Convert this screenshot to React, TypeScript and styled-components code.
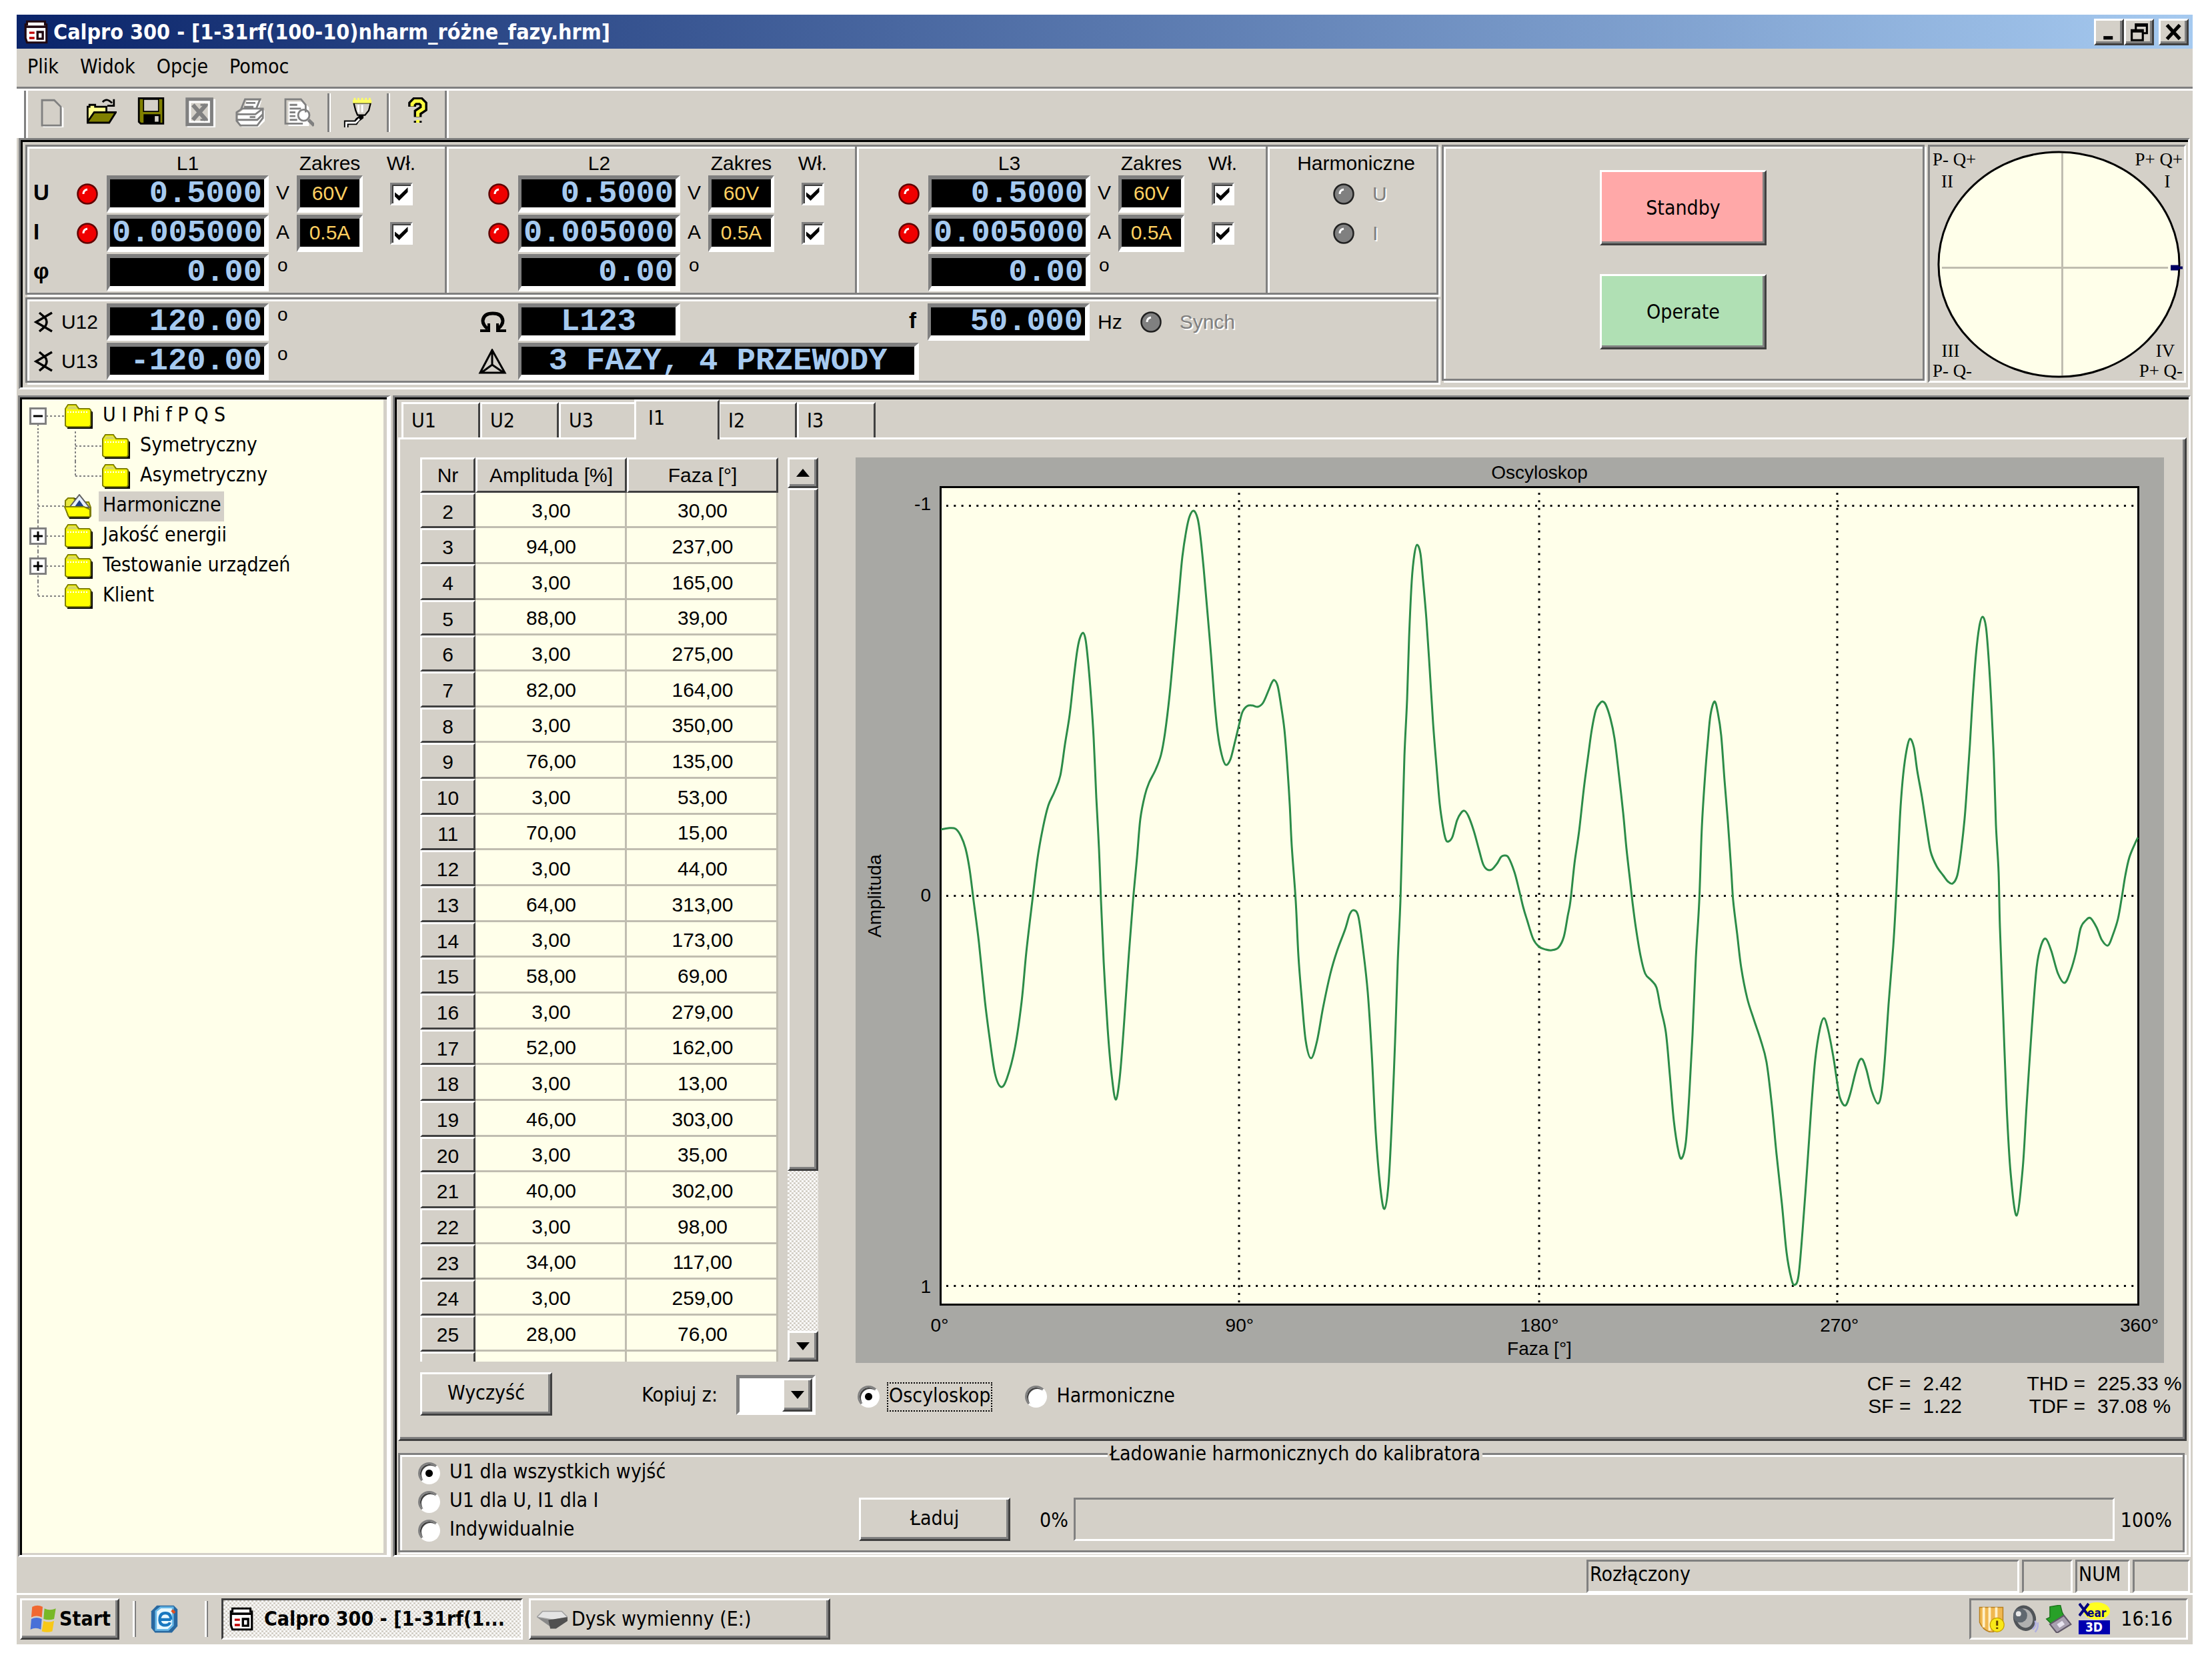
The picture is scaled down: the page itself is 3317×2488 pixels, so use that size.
import React from "react";
import styled, { createGlobalStyle, css } from "styled-components";

const face = "#d4d0c8";
const shade = "#808080";
const dark = "#404040";
const paper = "#ffffea";

const ui = `"DejaVu Sans Condensed", "DejaVu Sans", "Noto Sans", sans-serif`;
const sans = `"Liberation Sans", Arial, sans-serif`;
const mono = `"Liberation Mono", "Courier New", monospace`;
const serif = `"Liberation Serif", "Times New Roman", serif`;

const Global = createGlobalStyle`
  * { box-sizing: border-box; }
  body { margin: 0; background: #fff; }
  button, input, select { font: inherit; color: inherit; margin: 0; padding: 0; border-radius: 0; }
  svg { display: block; flex: none; }
`;

const raised = css`
  background: ${face};
  border: 3px solid;
  border-color: #fff ${dark} ${dark} #fff;
  box-shadow: inset -3px -3px 0 ${shade};
`;

const sunken = css`
  border: 3px solid;
  border-color: ${shade} #fff #fff ${shade};
`;

const etched = css`
  border: 3px solid ${shade};
  box-shadow: inset 3px 3px 0 #fff, 3px 3px 0 #fff;
`;

const Desktop = styled.div`
  min-height: 100vh;
  padding: 22px 29px 24px 25px;
  display: flex;
  flex-direction: column;
  font: 30px/36px ${ui};
  color: #000;
  white-space: nowrap;
`;

const Window = styled.div`
  flex: 1;
  display: flex;
  flex-direction: column;
  background: ${face};
`;

/* Title bar and menu */

const TitleBar = styled.header`
  height: 51px;
  padding: 0 6px 0 11px;
  display: flex;
  align-items: center;
  background: linear-gradient(90deg, #0a246a, #a6caf0);
  color: #fff;
`;

const Title = styled.h1`
  margin: 0 auto 0 8px;
  font: bold 32px/38px ${ui};
`;

const CaptionButton = styled.button<{ $apart?: boolean }>`
  ${raised}
  width: 45px;
  height: 40px;
  margin-left: ${(p) => (p.$apart ? 7 : 0)}px;
  display: grid;
  place-items: center;
`;

const MenuBar = styled.nav`
  height: 60px;
  padding: 0 16px 4px;
  display: flex;
  align-items: center;
  gap: 32px;
  border-bottom: 3px solid ${shade};
`;

const MenuItem = styled.button`
  border: 0;
  background: none;
`;

const ToolBar = styled.div`
  height: 74px;
  display: flex;
  border-top: 3px solid #fff;
`;

const ToolGroup = styled.div`
  margin-left: 11px;
  padding: 0 4px 6px 2px;
  display: flex;
  align-items: center;
  border-left: 3px solid ${shade};
  border-right: 3px solid ${shade};
  box-shadow: inset 3px 0 0 #fff, 3px 0 0 #fff, -11px 0 0 #fff;
`;

const ToolButton = styled.button`
  width: 74px;
  height: 60px;
  border: 0;
  background: none;
  display: grid;
  place-items: center;
`;

const Separator = styled.span`
  width: 3px;
  height: 58px;
  margin: 0 6px;
  background: ${shade};
  box-shadow: 2px 0 0 #fff;
`;

/* Instrument panel */

const Instruments = styled.section`
  margin: 0 4px 9px 3px;
  height: 377px;
  padding: 7px 3px 7px 7px;
  display: grid;
  grid-template-columns: 2119px 1fr 387px;
  column-gap: 5px;
  ${sunken}
  box-shadow: inset 3px 3px 0 #000;
  font-family: ${sans};
  font-size: 30px;
`;

const Readings = styled.div`
  display: flex;
  flex-direction: column;
  gap: 4px;
`;

const Phases = styled.div`
  ${etched}
  height: 225px;
  display: grid;
  grid-template-columns: 629px 615px 616px 1fr;
`;

const Phase = styled.fieldset<{ $lead: number }>`
  margin: 0;
  padding: 0;
  border: 0;
  border-right: 3px solid ${shade};
  box-shadow: 3px 0 0 #fff;
  display: grid;
  grid-template-columns: ${(p) => p.$lead}px 243px 42px 99px 115px;
  grid-template-rows: 40px 56px 56px 56px;
  row-gap: 3px;
  align-items: center;
`;

const Head = styled.span<{ $col?: number }>`
  grid-column: ${(p) => p.$col ?? "auto"};
  justify-self: center;
  padding-top: 9px;
  line-height: 32px;
`;

const Lead = styled.span`
  padding: 0 13px 0 9px;
  display: flex;
  align-items: center;
  justify-content: space-between;
  > svg:only-child { margin-left: auto; }
`;

const Big = styled.b`
  padding-bottom: 4px;
  font-size: 33px;
  line-height: 36px;
`;

const Lcd = styled.input<{ $span?: boolean; $align?: string }>`
  width: ${(p) => (p.$span ? 601 : 243)}px;
  height: 56px;
  padding: 0 3px;
  border: solid;
  border-width: 6px 7px 8px 5px;
  border-color: ${shade} #fff #fff ${shade};
  background: #000;
  color: #a6caf0;
  font: bold 47px/42px ${mono};
  text-align: ${(p) => p.$align ?? "right"};
  outline: none;
`;

const Range = styled.input`
  width: 99px;
  height: 56px;
  border: solid;
  border-width: 6px 5px 8px 5px;
  border-color: ${shade} #fff #fff ${shade};
  background: #000;
  color: #ffd060;
  font: 30px/40px ${sans};
  text-align: center;
  outline: none;
`;

const Unit = styled.span`
  padding-left: 11px;
  padding-bottom: 4px;
`;

const Degree = styled.span`
  align-self: start;
  padding-left: 13px;
  font-size: 28px;
  line-height: 34px;
`;

const Check = styled.input`
  appearance: none;
  justify-self: center;
  width: 34px;
  height: 34px;
  display: grid;
  place-items: center;
  background: #fff;
  border: 3px solid;
  border-color: ${shade} #fff #fff ${shade};
  box-shadow: inset 2px 2px 0 ${dark};
  &:checked::before {
    content: "";
    width: 20px;
    height: 20px;
    background: #000;
    clip-path: polygon(0 35%, 0 65%, 35% 100%, 100% 35%, 100% 0, 35% 62%);
  }
`;

const HarmonicLeds = styled.div`
  display: grid;
  grid-template-rows: 40px 56px 56px 56px;
  row-gap: 3px;
  padding-left: 12px;
`;

const LedLine = styled.span<{ $inset?: number }>`
  padding-left: ${(p) => p.$inset ?? 0}px;
  display: flex;
  align-items: center;
  gap: 27px;
  color: ${shade};
  text-shadow: 2px 2px 0 #fff;
`;

const Hertz = styled.span`
  color: #000;
  text-shadow: none;
`;

const Angles = styled.div`
  ${etched}
  height: 128px;
  padding-top: 6px;
  display: grid;
  grid-template-columns: 119px 243px 374px 243px 371px 243px 1fr;
  grid-template-rows: 56px 56px;
  row-gap: 3px;
  align-items: center;
`;

const Between = styled.span`
  align-self: stretch;
  display: flex;
  justify-content: space-between;
  align-items: center;
  padding-right: 17px;
`;

const OutputPanel = styled.div`
  ${etched}
  padding-bottom: 9px;
  margin-bottom: 3px;
  display: flex;
  flex-direction: column;
  align-items: center;
  justify-content: center;
  gap: 43px;
  font-family: ${ui};
`;

const OutputButton = styled.button<{ $color: string }>`
  ${raised}
  width: 250px;
  height: 113px;
  background: ${(p) => p.$color};
`;

const Phasor = styled.div`
  ${sunken}
  text { font: 27px ${serif}; }
`;

/* Work area */

const Work = styled.main`
  flex: 1;
  margin: 0 3px 0 2px;
  display: grid;
  grid-template-columns: 559px 1fr;
  column-gap: 3px;
`;

const Tree = styled.ul`
  ${sunken}
  border-right-width: 6px;
  box-shadow: inset 3px 3px 0 #000, inset -5px -3px 0 ${face};
  margin: 0;
  padding: 6px 0 0 10px;
  background: ${paper};
  list-style: none;
`;

const NodeRow = styled.div`
  height: 45px;
  display: flex;
  align-items: center;
`;

const NodeText = styled.button<{ $selected?: boolean }>`
  height: 45px;
  margin-left: 8px;
  padding: 0 4px 5px 6px;
  border: 0;
  background: ${(p) => (p.$selected ? face : "none")};
`;

const Editor = styled.section`
  ${sunken}
  box-shadow: inset 3px 3px 0 #000;
  padding: 3px 3px 4px 5px;
  display: flex;
  flex-direction: column;
`;

const Tabs = styled.div`
  height: 57px;
  padding-left: 5px;
  display: flex;
  align-items: flex-end;
`;

const Tab = styled.button<{ $active?: boolean }>`
  position: relative;
  width: ${(p) => (p.$active ? 128 : 118)}px;
  height: ${(p) => (p.$active ? 60 : 53)}px;
  margin: ${(p) => (p.$active ? "0 -2px -3px -5px" : "0")};
  padding: 0 0 ${(p) => (p.$active ? 8 : 0)}px ${(p) => (p.$active ? 18 : 12)}px;
  text-align: left;
  background: ${face};
  border: solid #fff;
  border-width: 3px 0 0 3px;
  border-right: 3px solid ${dark};
  z-index: ${(p) => (p.$active ? 1 : 0)};
`;

const Page = styled.div`
  flex: 1;
  border: 3px solid;
  border-color: #fff ${dark} ${dark} #fff;
  box-shadow: inset -3px -3px 0 ${shade};
  padding: 27px 3px 35px 30px;
  display: grid;
  grid-template-columns: 597px minmax(0, 1fr);
  grid-template-rows: 1fr auto;
  column-gap: 56px;
  row-gap: 14px;
`;

const ListBox = styled.div`
  display: flex;
  justify-content: space-between;
  height: 1356px;
`;

const TableClip = styled.div`
  overflow: hidden;
`;

const Table = styled.table`
  width: 537px;
  table-layout: fixed;
  border-collapse: separate;
  border-spacing: 0;
  font: 30px/36px ${sans};
  text-align: center;
  th { font-weight: normal; padding: 0; ${raised} box-shadow: none; }
  tbody th { padding-top: 4px; }
  tbody tr { height: 54px; }
  tbody tr:nth-child(3n + 1) { height: 53px; }
  thead tr { height: 53px; }
  td { padding: 4px 0 0 3px; background: ${paper}; border: solid #c0bdb0; border-width: 0 3px 3px 0; }
`;

const Scroll = styled.div`
  width: 46px;
  display: flex;
  flex-direction: column;
`;

const ScrollButton = styled.button`
  ${raised}
  height: 46px;
  display: grid;
  place-items: center;
`;

const Track = styled.div`
  flex: 1;
  display: flex;
  flex-direction: column;
  background: repeating-conic-gradient(#fff 0 25%, ${face} 0 50%) 0 0 / 6px 6px;
`;

const Thumb = styled.div`
  ${raised}
  flex: 0 0 81%;
`;

const Chart = styled.figure`
  margin: 0 28px 0 0;
  display: grid;
  grid-template-columns: 44px 82px minmax(0, 1fr) 37px;
  grid-template-rows: 43px 1fr 86px;
  background: #a8a8a4;
  font: 28px/30px ${sans};
`;

const ChartTitle = styled.figcaption`
  grid-column: 3;
  padding-top: 8px;
  text-align: center;
`;

const AxisName = styled.span`
  grid-area: 2 / 1;
  justify-self: end;
  writing-mode: vertical-rl;
  rotate: 180deg;
  text-align: center;
`;

const YTicks = styled.div`
  grid-area: 2 / 2;
  padding: 12px 13px 13px 0;
  display: flex;
  flex-direction: column;
  justify-content: space-between;
  align-items: flex-end;
`;

const Plot = styled.svg`
  grid-area: 2 / 3;
  width: 100%;
  height: 100%;
`;

const XAxis = styled.div`
  grid-area: 3 / 3;
  margin: 0 -40px;
  padding-top: 15px;
  text-align: center;
`;

const XTicks = styled.div`
  display: flex;
  justify-content: space-between;
  span { width: 80px; }
  margin-bottom: 5px;
`;

const TableTools = styled.div`
  display: flex;
  align-items: center;
`;

const PushButton = styled.button<{ $wide?: boolean }>`
  ${raised}
  width: ${(p) => (p.$wide ? 227 : 198)}px;
  height: 65px;
  padding-bottom: 4px;
`;

const CopyLabel = styled.label`
  margin: 2px 4px 0 auto;
  display: flex;
  align-items: center;
  gap: 28px;
`;

const Combo = styled.span`
  width: 119px;
  height: 60px;
  border: 5px solid;
  border-color: ${shade} #fff #fff ${shade};
  background: #fff;
  display: grid;
  grid-template-columns: 1fr 45px;
  select {
    grid-area: 1 / 1 / 2 / 3;
    appearance: none;
    border: 0;
    background: #fff;
  }
`;

const ComboArrow = styled.span`
  ${raised}
  grid-area: 1 / 2;
  pointer-events: none;
  display: grid;
  place-items: center;
`;

const ViewTools = styled.div`
  height: 65px;
  padding-left: 3px;
  display: flex;
  align-items: center;
`;

const Choice = styled.label<{ $focus?: boolean }>`
  height: 32px;
  margin: 8px 51px 0 0;
  display: flex;
  align-items: center;
  gap: 13px;
  span {
    padding: 0 1px 4px;
    outline: ${(p) => (p.$focus ? "2px dotted #000" : "none")};
  }
`;

const Radio = styled.input.attrs({ type: "radio" })`
  appearance: none;
  width: 33px;
  height: 33px;
  border: 3px solid;
  border-color: ${shade} #fff #fff ${shade};
  border-radius: 50%;
  background: #fff;
  box-shadow: inset 2px 2px 0 ${dark};
  &:checked { background: radial-gradient(circle, #000 0 5px, #fff 6px); }
`;

const Factors = styled.dl`
  margin: 0 0 0 auto;
  align-self: start;
  display: grid;
  grid-template-columns: auto 156px auto 128px;
  font: 30px/34px ${sans};
  dt { text-align: right; padding-right: 18px; }
  dd { margin: 0; }
`;

const Loader = styled.fieldset`
  margin: 6px 3px 0 0;
  padding: 0 16px 14px 27px;
  border: 3px solid ${shade};
  min-width: 0;
  box-shadow: inset 3px 3px 0 #fff, 3px 3px 0 #fff;
  legend {
    margin: 0 auto;
    padding: 0 3px;
    line-height: 26px;
    background: ${face};
  }
`;

const LoaderBody = styled.div`
  display: grid;
  grid-template-columns: 661px auto auto 1fr auto;
  align-items: end;
`;

const Modes = styled.div`
  display: flex;
  flex-direction: column;
  gap: 11px;
  ${Choice} { margin: 0; }
`;

const Percent = styled.span<{ $before?: boolean }>`
  padding: 0 ${(p) => (p.$before ? 8 : 0)}px 13px ${(p) => (p.$before ? 44 : 9)}px;
`;

const Progress = styled.div`
  ${sunken}
  height: 65px;
`;

/* Status bar and task bar */

const StatusBar = styled.footer`
  margin: 4px 4px 0 0;
  height: 50px;
  display: flex;
  justify-content: flex-end;
  gap: 4px;
`;

const StatusCell = styled.span<{ $width: number }>`
  ${sunken}
  width: ${(p) => p.$width}px;
  padding-left: 2px;
  line-height: 38px;
`;

const TaskBar = styled.footer`
  height: 77px;
  padding: 5px 7px 8px 5px;
  display: flex;
  align-items: center;
  border-top: 3px solid #fff;
`;

const StartButton = styled.button`
  ${raised}
  width: 149px;
  height: 62px;
  display: flex;
  align-items: center;
  justify-content: center;
  gap: 4px;
  font-weight: bold;
`;

const Grip = styled.span<{ $apart?: boolean }>`
  width: 5px;
  height: 54px;
  margin: 0 20px 0 ${(p) => (p.$apart ? 38 : 20)}px;
  border-left: 3px solid #fff;
  border-right: 2px solid ${shade};
`;

const TaskButton = styled.button<{ $active?: boolean }>`
  ${raised}
  width: 452px;
  height: 62px;
  padding: 0 0 0 9px;
  margin-right: 9px;
  display: flex;
  align-items: center;
  gap: 6px;
  ${(p) =>
    p.$active &&
    css`
      gap: 16px;
      font-weight: bold;
      background: repeating-conic-gradient(#fff 0 25%, ${face} 0 50%) 0 0 / 6px 6px;
      border-color: ${dark} #fff #fff ${dark};
      box-shadow: none;
    `}
`;

const Tray = styled.div`
  ${sunken}
  width: 328px;
  height: 62px;
  margin-left: auto;
  padding: 0 20px 0 10px;
  display: flex;
  align-items: center;
  gap: 9px;
  time { margin-left: auto; }
`;

/* Drawings */

const Icon = ({ size = 45, children }: { size?: number; children: React.ReactNode }) => (
  <svg width={size} height={size} viewBox="0 0 16 16" fill="none" aria-hidden="true">
    {children}
  </svg>
);

const AppIcon = ({ tint = "#000" }: { tint?: string }) => (
  <svg width="36" height="36" viewBox="0 0 16 16" fill="none" aria-hidden="true">
    <path d="M1 12V3h1V1h12v2h1v12H2z" fill="#fff" stroke={tint} strokeWidth="1.4" />
    <path d="M1 4.5h14" stroke={tint} strokeWidth="1.6" />
    <path d="M3.5 8.5h3.5M3.5 12h3.5" stroke="#c00000" strokeWidth="1.5" />
    <path d="M9 8h3.5v4.5H9z" stroke={tint} strokeWidth="1.5" />
  </svg>
);

const Led = ({ on = false }: { on?: boolean }) => (
  <svg width="32" height="32" viewBox="0 0 32 32" aria-hidden="true">
    <circle cx="16" cy="16" r="14.5" fill={on ? "#f00000" : "#808080"} stroke={on ? "#600000" : "#202020"} strokeWidth="2.5" />
    <path d="M10 16q0-6 6-7" stroke="#fff" strokeWidth="3" fill="none" />
  </svg>
);

const Triangle = ({ down = false }: { down?: boolean }) => (
  <svg width="20" height="12" viewBox="0 0 20 12" aria-hidden="true">
    <path d={down ? "M0 0h20L10 12z" : "M0 12h20L10 0z"} fill="#000" />
  </svg>
);

const Folder = ({ open = false }: { open?: boolean }) => (
  <svg width="44" height="38" viewBox="0 0 44 38" aria-hidden="true">
    {open ? (
      <>
        <path d="M3 20l3-12 8-3 24 8 3 20-4 4H8z" fill="#000" />
        <path d="M2 20V10l4-4h8l6 6h17l3 8v12H6z" fill="#e8e840" stroke="#808000" strokeWidth="2" />
        <path d="M8 20L23 1l15 19z" fill="#e8f0ff" stroke="#606060" strokeWidth="2" />
        <path d="M16 19l7-10 7 10z" fill="#204080" />
        <path d="M1 19h29l9 4v11H7z" fill="#ffff00" stroke="#808000" strokeWidth="2" />
      </>
    ) : (
      <>
        <path d="M5 37V9l4-5h12l4 5h15l3 3v25z" fill="#000" />
        <path d="M2 32V7l4-6h12l4 6h16l2 2v23l-2 2H4z" fill="#ffff00" stroke="#808000" strokeWidth="2" />
        <path d="M4 8l3-5h10l4 5z" fill="#d8d860" />
        <path d="M5 12h32" stroke="#fff" strokeWidth="2" strokeDasharray="2 2" />
      </>
    )}
  </svg>
);

/* Branch lines and the expander box left of a tree node. */
const Branch = ({ sign, first, last, through }: { sign?: string; first?: boolean; last?: boolean; through?: boolean }) => (
  <svg width="56" height="45" viewBox="0 0 56 45" fill="none" aria-hidden="true">
    <path d={`M17 ${first ? 22 : 0}V${last ? 22 : 45}`} stroke={shade} strokeWidth="2" strokeDasharray="3 3" />
    {!through && <path d="M17 22h39" stroke={shade} strokeWidth="2" strokeDasharray="3 3" />}
    {sign && (
      <>
        <path d="M5.5 10.5h23v23h-23z" fill="#fff" stroke={shade} strokeWidth="3" />
        <path d={sign === "-" ? "M10 22h14" : "M10 22h14M17 15v14"} stroke="#000" strokeWidth="3" />
      </>
    )}
  </svg>
);

const AngleIcon = () => (
  <svg width="30" height="34" viewBox="0 0 30 34" fill="none" stroke="#000" strokeWidth="3.5" aria-hidden="true">
    <path d="M28 3L4 17l24 14M9 3q5 4 9 8 4 6 0 12-4 4-9 8" />
  </svg>
);

const toolIcons: Record<string, React.ReactNode> = {
  Nowy: (
    <>
      <path d="M3.5 2.5h6.5l3.5 3.5v10h-10z" stroke="#fff" />
      <path d="M2.5 1.5h6.5l3.5 3.500v10h-10z" stroke={shade} fill={face} />
    </>
  ),
  Otwórz: (
    <>
      <path d="M.5 13V5h1V4h3v1h6v3" fill="#ffff90" stroke="#000" />
      <path d="M.5 13L4 8h11.5l-3.5 5.500H.5z" fill="#808000" stroke="#000" />
      <path d="M8.500 2.500q2-2.500 5 .5M14.500 1v3.500h-3.500" stroke="#000" />
    </>
  ),
  Zapisz: (
    <>
      <path d="M1.500.5h13v13.500h-12l-1-1z" fill="#808000" stroke="#000" />
      <path d="M4 1h8v6.500H4z" fill={face} stroke="#000" strokeWidth=".6" />
      <path d="M4 9h9v5H4z" fill="#000" />
      <path d="M10 10h2v3h-2z" fill={face} />
    </>
  ),
  Excel: (
    <>
      <path d="M1 1h15v15.500H1z" fill="#fff" />
      <path d="M1 1h13v13.500H1z" stroke={shade} strokeWidth="1.8" />
      <path d="M3 3h9v9.500H3z" fill={face} />
      <path d="M4 4l7 8M11 4l-7 8" stroke={shade} strokeWidth="2.2" />
      <path d="M8 4h4M8 12h4" stroke={shade} />
    </>
  ),
  Drukuj: (
    <>
      <path d="M5.500 1h8l-2 6h-8zM1 8l3-2.500h10l1.500 1v5L12 15H3l-2-3z" fill="#fff" transform="translate(.8 .8)" />
      <path d="M5.500 1h8l-2 5h-8zM6 3h5M5 5h5M1 8l3-2h11v5l-3 4H3l-2-2.500zM1 9h10l4-3M1 12h11l3-3" stroke={shade} />
      <path d="M8 10h3v1H8z" fill={shade} />
    </>
  ),
  Podgląd: (
    <>
      <path d="M1.500 1.500h8l3 3v10h-11z" fill="#fff" transform="translate(.8 .8)" />
      <path d="M11.500 8V4L9 1H.7v13H10M3 4h4M3 6h6M3 8h3M3 10h3M3 12h4" stroke={shade} />
      <circle cx="10.500" cy="9.500" r="3" stroke={shade} />
      <path d="M13 12l3 3" stroke={shade} strokeWidth="1.8" />
    </>
  ),
  Sonda: (
    <>
      <path d="M1.500 16v-2.500h5l1-1.500 2-1.500V8" stroke="#000" strokeWidth="2.4" />
      <path d="M1.500 16.200v-2.700h5l2-2" stroke="#fff" strokeWidth="1" />
      <path d="M5.500 3h9l-1 4-2 2.500h-4L6.500 7z" fill={face} stroke="#000" strokeWidth=".8" />
      <path d="M8 4v4M10 4v4" stroke="#fff" />
      <path d="M5 2.200h10" stroke="#ffff60" strokeWidth="1.800" />
      <path d="M5.500.8h9" stroke="#ffff60" strokeDasharray="1 1" />
    </>
  ),
  Pomoc: (
    <>
      <path d="M5 5V3.500L6.500 2h3L11 3.500V6L8 8v2.500M8 12.500v1" stroke="#000" strokeWidth="4.200" />
      <path d="M5 4.800V3.500L6.500 2h3L11 3.500V6L8 8v2.300M8 12v1.500" stroke="#ffff40" strokeWidth="1.8" />
    </>
  ),
};

/* Oscilloscope trace, in the plot's own units. */
const trace: number[] = [
  1412, 1243, 1423, 1241, 1434, 1242, 1442, 1253, 1449, 1272, 1455, 1303, 1461, 1350, 1469, 1413, 1478, 1501, 1485, 1556,
  1493, 1609, 1502, 1629, 1511, 1616, 1523, 1570, 1533, 1501, 1540, 1427, 1549, 1350, 1557, 1285, 1565, 1240, 1573, 1207,
  1582, 1187, 1591, 1162, 1598, 1115, 1605, 1071, 1611, 1017, 1616, 977, 1620, 957, 1625, 948, 1629, 959, 1633, 995,
  1637, 1044, 1641, 1106, 1645, 1196, 1649, 1272, 1652, 1350, 1656, 1441, 1662, 1542, 1668, 1611, 1674, 1648, 1680, 1616,
  1686, 1542, 1693, 1441, 1700, 1350, 1706, 1285, 1711, 1227, 1718, 1191, 1724, 1173, 1734, 1153, 1742, 1131, 1748, 1098,
  1755, 1040, 1762, 964, 1769, 888, 1774, 834, 1780, 794, 1785, 773, 1791, 765, 1797, 777, 1801, 803, 1806, 852,
  1811, 910, 1817, 981, 1822, 1048, 1827, 1098, 1833, 1131, 1839, 1146, 1846, 1138, 1853, 1111, 1859, 1086, 1864, 1067,
  1871, 1058, 1879, 1057, 1887, 1059, 1895, 1053, 1903, 1035, 1908, 1023, 1912, 1019, 1917, 1028, 1922, 1057, 1927, 1093,
  1931, 1142, 1935, 1205, 1938, 1267, 1944, 1350, 1948, 1432, 1953, 1496, 1959, 1560, 1967, 1586, 1976, 1560, 1985, 1510,
  1996, 1459, 2006, 1425, 2018, 1393, 2025, 1370, 2031, 1364, 2038, 1374, 2045, 1423, 2052, 1487, 2058, 1579, 2064, 1698,
  2071, 1781, 2077, 1812, 2083, 1776, 2088, 1684, 2093, 1560, 2097, 1441, 2101, 1350, 2104, 1240, 2107, 1133, 2111, 1048,
  2114, 955, 2118, 870, 2122, 830, 2126, 816, 2131, 829, 2135, 870, 2140, 928, 2145, 1004, 2150, 1084, 2155, 1147,
  2160, 1205, 2165, 1240, 2169, 1258, 2173, 1261, 2179, 1254, 2186, 1229, 2192, 1218, 2197, 1215, 2203, 1223, 2211, 1245,
  2219, 1274, 2225, 1295, 2231, 1303, 2238, 1303, 2246, 1294, 2252, 1284, 2257, 1282, 2263, 1285, 2272, 1307, 2279, 1334,
  2285, 1359, 2291, 1379, 2300, 1407, 2309, 1419, 2319, 1423, 2328, 1424, 2338, 1420, 2346, 1404, 2352, 1372, 2356, 1350,
  2362, 1294, 2369, 1245, 2376, 1182, 2383, 1129, 2388, 1093, 2394, 1064, 2400, 1054, 2404, 1051, 2409, 1056, 2416, 1077,
  2422, 1106, 2428, 1155, 2435, 1218, 2440, 1272, 2446, 1325, 2449, 1352, 2454, 1390, 2461, 1432, 2468, 1459, 2477, 1469,
  2485, 1480, 2491, 1510, 2499, 1547, 2505, 1611, 2511, 1680, 2518, 1726, 2523, 1736, 2529, 1712, 2534, 1643, 2539, 1551,
  2544, 1436, 2549, 1352, 2553, 1240, 2558, 1160, 2562, 1111, 2566, 1071, 2572, 1051, 2577, 1068, 2582, 1102, 2587, 1169,
  2592, 1231, 2597, 1303, 2600, 1350, 2606, 1400, 2612, 1450, 2621, 1496, 2631, 1528, 2641, 1558, 2650, 1592, 2658, 1657,
  2665, 1730, 2673, 1804, 2680, 1877, 2687, 1916, 2692, 1926, 2698, 1912, 2704, 1845, 2711, 1749, 2717, 1661, 2723, 1588,
  2730, 1542, 2736, 1526, 2742, 1542, 2750, 1583, 2755, 1616, 2760, 1645, 2768, 1657, 2775, 1641, 2783, 1609, 2789, 1590,
  2794, 1588, 2800, 1604, 2808, 1636, 2817, 1654, 2823, 1634, 2828, 1579, 2833, 1505, 2840, 1418, 2844, 1350, 2848, 1267,
  2851, 1209, 2855, 1160, 2860, 1124, 2865, 1107, 2871, 1120, 2876, 1155, 2883, 1194, 2890, 1240, 2896, 1276, 2905, 1298,
  2915, 1312, 2922, 1321, 2929, 1324, 2936, 1312, 2941, 1281, 2947, 1227, 2951, 1173, 2955, 1115, 2959, 1048, 2964, 981,
  2969, 939, 2974, 924, 2979, 939, 2983, 986, 2987, 1053, 2991, 1142, 2994, 1236, 2998, 1307, 3000, 1390, 3005, 1524,
  3010, 1657, 3016, 1758, 3025, 1822, 3034, 1753, 3040, 1657, 3048, 1537, 3055, 1450, 3062, 1416, 3069, 1407, 3077, 1425,
  3087, 1459, 3097, 1473, 3106, 1455, 3114, 1427, 3121, 1391, 3129, 1379, 3136, 1376, 3145, 1390, 3153, 1409, 3162, 1417,
  3169, 1402, 3177, 1377, 3183, 1343, 3188, 1312, 3194, 1285, 3203, 1263, 3207, 1255,
];

/* Smooth curve through the samples (Catmull-Rom turned into Béziers). */
const curve = (() => {
  const n = trace.length / 2;
  const at = (i: number) => {
    const k = Math.max(0, Math.min(n - 1, i));
    return [trace[2 * k], trace[2 * k + 1]];
  };
  let d = `M${trace[0]} ${trace[1]}`;
  for (let i = 0; i < n - 1; i++) {
    const [a, b, c, e] = [at(i - 1), at(i), at(i + 1), at(i + 2)];
    d += `C${b[0] + (c[0] - a[0]) / 6} ${b[1] + (c[1] - a[1]) / 6} ${c[0] - (e[0] - b[0]) / 6} ${c[1] - (e[1] - b[1]) / 6} ${c[0]} ${c[1]}`;
  }
  return d;
})();

const amplitudes = [
  "3,00", "94,00", "3,00", "88,00", "3,00", "82,00", "3,00", "76,00", "3,00", "70,00", "3,00", "64,00",
  "3,00", "58,00", "3,00", "52,00", "3,00", "46,00", "3,00", "40,00", "3,00", "34,00", "3,00", "28,00",
];
const angles = [
  30, 237, 165, 39, 275, 164, 350, 135, 53, 15, 44, 313, 173, 69, 279, 162, 13, 303, 35, 302, 98, 117, 259, 76,
];

const PhaseGroup = ({ name, first }: { name: string; first?: boolean }) => (
  <Phase $lead={first ? 119 : 107} aria-label={name}>
    <Head $col={2}>{name}</Head>
    <Head $col={4}>Zakres</Head>
    <Head $col={5}>Wł.</Head>
    {[
      ["U", "0.5000", "V", "60V"],
      ["I", "0.005000", "A", "0.5A"],
    ].map(([q, value, unit, range]) => (
      <React.Fragment key={q}>
        <Lead>
          {first && <Big>{q}</Big>}
          <Led on />
        </Lead>
        <Lcd readOnly value={value} aria-label={`${q} ${name}`} />
        <Unit>{unit}</Unit>
        <Range readOnly value={range} aria-label={`Zakres ${q} ${name}`} />
        <Check type="checkbox" defaultChecked aria-label={`Wł. ${q} ${name}`} />
      </React.Fragment>
    ))}
    <Lead>{first && <Big>φ</Big>}</Lead>
    <Lcd readOnly value="0.00" aria-label={`φ ${name}`} />
    <Degree>o</Degree>
  </Phase>
);

const tree = [
  { text: "U I Phi f P Q S", level: 0, sign: "-", first: true },
  { text: "Symetryczny", level: 1 },
  { text: "Asymetryczny", level: 1, last: true },
  { text: "Harmoniczne", level: 0, selected: true },
  { text: "Jakość energii", level: 0, sign: "+" },
  { text: "Testowanie urządzeń", level: 0, sign: "+" },
  { text: "Klient", level: 0, last: true },
];

export default function App() {
  return (
    <Desktop>
      <Global />
      <Window>
        <TitleBar>
          <AppIcon tint="#200810" />
          <Title>Calpro 300 - [1-31rf(100-10)nharm_różne_fazy.hrm]</Title>
          <CaptionButton aria-label="Minimalizuj">
            <Icon size={28}><path d="M3 13h8" stroke="#000" strokeWidth="3" /></Icon>
          </CaptionButton>
          <CaptionButton aria-label="Przywróć">
            <Icon size={28}>
              <path d="M5 6V1.500h9.500V9H11M5 2.500h9M1.500 6.500H11V15H1.500zM1.500 7.500H11" stroke="#000" strokeWidth="1.8" />
            </Icon>
          </CaptionButton>
          <CaptionButton $apart aria-label="Zamknij">
            <Icon size={28}><path d="M2 2l11 12M13 2L2 14" stroke="#000" strokeWidth="3" /></Icon>
          </CaptionButton>
        </TitleBar>

        <MenuBar>
          {["Plik", "Widok", "Opcje", "Pomoc"].map((m) => <MenuItem key={m}>{m}</MenuItem>)}
        </MenuBar>

        <ToolBar>
          <ToolGroup>
            {Object.entries(toolIcons).map(([name, art]) => (
              <React.Fragment key={name}>
                {(name === "Sonda" || name === "Pomoc") && <Separator />}
                <ToolButton aria-label={name}><Icon>{art}</Icon></ToolButton>
              </React.Fragment>
            ))}
          </ToolGroup>
        </ToolBar>

        <Instruments>
          <Readings>
            <Phases>
              <PhaseGroup name="L1" first />
              <PhaseGroup name="L2" />
              <PhaseGroup name="L3" />
              <HarmonicLeds>
                <Head>Harmoniczne</Head>
                <LedLine $inset={86}><Led />U</LedLine>
                <LedLine $inset={86}><Led />I</LedLine>
              </HarmonicLeds>
            </Phases>
            <Angles>
              <Lead><AngleIcon /><span>U12</span></Lead>
              <Lcd readOnly value="120.00" aria-label="U12" />
              <Between>
                <Degree>o</Degree>
                <svg width="41" height="32" viewBox="0 0 41 32" fill="none" stroke="#000" strokeWidth="5" aria-hidden="true">
                  <path d="M12 26Q5 20 5 14 6 3 20 3t15 11q0 6-7 12" />
                  <path d="M1 29h13V18M40 29H27V18" strokeWidth="4" />
                </svg>
              </Between>
              <Lcd readOnly value="L123" $align="center" aria-label="Kolejność faz" />
              <Between><span /><Big>f</Big></Between>
              <Lcd readOnly value="50.000" aria-label="Częstotliwość" />
              <LedLine $inset={12}>
                <Hertz>Hz</Hertz>
                <Led />
                Synch
              </LedLine>
              <Lead><AngleIcon /><span>U13</span></Lead>
              <Lcd readOnly value="-120.00" aria-label="U13" />
              <Between>
                <Degree>o</Degree>
                <svg width="43" height="38" viewBox="0 0 43 38" fill="none" stroke="#000" strokeWidth="3" aria-hidden="true">
                  <path d="M21 2L3 36h37zM21 4v20L6 35M21 24l16 11" />
                </svg>
              </Between>
              <Lcd readOnly $span $align="center" value="3 FAZY, 4 PRZEWODY" aria-label="Układ" />
            </Angles>
          </Readings>
          <OutputPanel>
            <OutputButton $color="#ffa8a8">Standby</OutputButton>
            <OutputButton $color="#b0e0b4">Operate</OutputButton>
          </OutputPanel>
          <Phasor>
            <svg width="100%" height="100%" viewBox="0 0 382 352">
              <ellipse cx="194" cy="177" rx="181" ry="169" fill={paper} stroke="#000" strokeWidth="3" />
              <path d="M199 10v334M18 182h340" stroke="#c0bdb0" strokeWidth="3" />
              <path d="M362 182h18" stroke="#000060" strokeWidth="4" />
              <path d="M362 178h12v8h-12z" fill="#000060" />
              <text x="4" y="28">P- Q+</text>
              <text x="26" y="61" textAnchor="middle">II</text>
              <text x="380" y="28" textAnchor="end">P+ Q+</text>
              <text x="357" y="61" textAnchor="middle">I</text>
              <text x="31" y="316" textAnchor="middle">III</text>
              <text x="4" y="346">P- Q-</text>
              <text x="354" y="316" textAnchor="middle">IV</text>
              <text x="380" y="346" textAnchor="end">P+ Q-</text>
            </svg>
          </Phasor>
        </Instruments>

        <Work>
          <Tree>
            {tree.map((n) => (
              <li key={n.text}>
                <NodeRow>
                  <Branch sign={n.sign} first={n.first} last={n.last && n.level === 0} through={n.level === 1} />
                  {n.level === 1 && <Branch last={n.last} />}
                  <Folder open={n.selected} />
                  <NodeText $selected={n.selected}>{n.text}</NodeText>
                </NodeRow>
              </li>
            ))}
          </Tree>

          <Editor>
            <Tabs role="tablist">
              {["U1", "U2", "U3", "I1", "I2", "I3"].map((t) => (
                <Tab key={t} role="tab" aria-selected={t === "I1"} $active={t === "I1"}>{t}</Tab>
              ))}
            </Tabs>
            <Page>
              <ListBox>
                <TableClip>
                  <Table>
                    <colgroup>
                      <col width="83" />
                      <col width="227" />
                      <col width="227" />
                    </colgroup>
                    <thead>
                      <tr><th>Nr</th><th>Amplituda [%]</th><th>Faza [°]</th></tr>
                    </thead>
                    <tbody>
                      {amplitudes.map((a, i) => (
                        <tr key={i}><th>{i + 2}</th><td>{a}</td><td>{angles[i]},00</td></tr>
                      ))}
                      <tr><th /><td /><td /></tr>
                    </tbody>
                  </Table>
                </TableClip>
                <Scroll>
                  <ScrollButton aria-label="W górę"><Triangle /></ScrollButton>
                  <Track><Thumb /></Track>
                  <ScrollButton aria-label="W dół"><Triangle down /></ScrollButton>
                </Scroll>
              </ListBox>

              <Chart>
                <ChartTitle>Oscyloskop</ChartTitle>
                <AxisName>Amplituda</AxisName>
                <YTicks><span>-1</span><span>0</span><span>1</span></YTicks>
                <Plot viewBox="1410 728 1799 1229" preserveAspectRatio="none">
                  <rect x="1411.5" y="729.5" width="1796" height="1226" fill={paper} stroke="#000" strokeWidth="3" />
                  <path
                    d="M1420 757.500H3206M1420 1342.500H3206M1420 1927.500H3206M1859 738V1954M2309 738V1954M2756 738V1954"
                    stroke="#000" strokeWidth="3" strokeDasharray="3 8.320"
                  />
                  <path d={curve} fill="none" stroke="#2c8c48" strokeWidth="3" strokeLinejoin="round" />
                </Plot>
                <XAxis>
                  <XTicks>{["0°", "90°", "180°", "270°", "360°"].map((t) => <span key={t}>{t}</span>)}</XTicks>
                  Faza [°]
                </XAxis>
              </Chart>

              <TableTools>
                <PushButton>Wyczyść</PushButton>
                <CopyLabel>
                  Kopiuj z:
                  <Combo>
                    <select aria-label="Kopiuj z"><option /></select>
                    <ComboArrow><Triangle down /></ComboArrow>
                  </Combo>
                </CopyLabel>
              </TableTools>

              <ViewTools>
                <Choice $focus><Radio name="view" defaultChecked /><span>Oscyloskop</span></Choice>
                <Choice><Radio name="view" /><span>Harmoniczne</span></Choice>
                <Factors>
                  <dt>CF =</dt><dd>2.42</dd><dt>THD =</dt><dd>225.33 %</dd>
                  <dt>SF =</dt><dd>1.22</dd><dt>TDF =</dt><dd>37.08 %</dd>
                </Factors>
              </ViewTools>
            </Page>

            <Loader>
              <legend>Ładowanie harmonicznych do kalibratora</legend>
              <LoaderBody>
                <Modes>
                  <Choice><Radio name="mode" defaultChecked /><span>U1 dla wszystkich wyjść</span></Choice>
                  <Choice><Radio name="mode" /><span>U1 dla U, I1 dla I</span></Choice>
                  <Choice><Radio name="mode" /><span>Indywidualnie</span></Choice>
                </Modes>
                <PushButton $wide>Ładuj</PushButton>
                <Percent $before>0%</Percent>
                <Progress role="progressbar" aria-valuenow={0} />
                <Percent>100%</Percent>
              </LoaderBody>
            </Loader>
          </Editor>
        </Work>

        <StatusBar>
          <StatusCell $width={649}>Rozłączony</StatusCell>
          <StatusCell $width={76} />
          <StatusCell $width={82}>NUM</StatusCell>
          <StatusCell $width={86} />
        </StatusBar>

        <TaskBar>
          <StartButton>
            <Icon size={42}>
              <path d="M2 1q3-1.500 6 0L7.500 7q-3-1.500-6 0z" fill="#f06830" />
              <path d="M9 2q3 1.500 6.500 0L14.500 8q-3 1-6 0z" fill="#78b828" />
              <path d="M1.500 8q3-1.500 6 0L7 14q-3-1.500-6 0z" fill="#4870d8" />
              <path d="M8.500 9q3 1.500 6 0L13.500 15q-3 1-6 0z" fill="#f8c818" />
            </Icon>
            Start
          </StartButton>
          <Grip />
          <Icon size={45}>
            <path d="M4 1h9l2 2v9l-3 3.500H3L1 13V4z" fill="#2868a0" />
            <path d="M3.500 4L6 2h6.500v9.500L10 14H3.500z" fill="#e8f8ff" stroke="#68b8e8" />
            <path d="M11.500 8.500h-6q0-3.500 3-3.500t3 3.500M5.500 8.500q0 3 3 3 2 0 2.500-1.500" stroke="#1878c0" strokeWidth="1.5" />
            <path d="M12 3.500l1.500 1.500" stroke="#e05020" strokeWidth="1.5" />
          </Icon>
          <Grip $apart />
          <TaskButton $active><AppIcon />Calpro 300 - [1-31rf(1...</TaskButton>
          <TaskButton>
            <Icon size={46}>
              <path d="M0 7l3-3h10l3 3-6 5H7z" fill="#888" />
              <path d="M0 7l3-3h10l3 3-7 1.500z" fill="#e4e4e4" stroke="#a0a0a0" strokeWidth=".5" />
              <path d="M6 8.500l10-1.500v2l-6 4H7z" fill="#505050" />
            </Icon>
            Dysk wymienny (E:)
          </TaskButton>
          <Tray>
            <Icon size={40}>
              <path d="M1 1h14v9q-2 5-7 6-5-1-7-6z" fill="#f0b850" stroke="#b88020" strokeWidth=".6" />
              <path d="M3.500 1v12M7 1v14M11 1v13" stroke="#fff0c8" strokeWidth="1.5" />
              <circle cx="11.500" cy="11.500" r="4.200" fill="#f8e818" stroke="#c8a000" strokeWidth=".5" />
              <path d="M11.500 9v3M11.500 13v1" stroke="#604000" strokeWidth="1.2" />
            </Icon>
            <Icon size={42}>
              <ellipse cx="8" cy="7.500" rx="5.500" ry="6.500" fill="#b0b0b0" stroke="#505458" strokeWidth="1.8" transform="rotate(-20 8 7.500)" />
              <circle cx="5.500" cy="6" r="4" fill="#606870" />
              <circle cx="4.500" cy="5" r="1.500" fill="#e8e8e8" />
              <path d="M14 9q1 3-1.500 5M15.500 10q.5 3-1.500 5.500" stroke="#b0b0e0" />
            </Icon>
            <Icon size={42}>
              <path d="M3 1l6-1 1 4 1 2-7 5-3-3 2-1z" fill="#28a028" stroke="#187018" strokeWidth=".5" />
              <path d="M3 11l8-5 4 5-8 5z" fill="#a8a0b0" stroke="#605868" strokeWidth=".8" />
              <path d="M7 11l3-2 1.500 2-3 2z" fill="#e8e4f0" />
            </Icon>
            <svg width="47" height="50" viewBox="0 0 47 50" aria-hidden="true">
              <ellipse cx="27" cy="13" rx="20" ry="13" fill="#ffff20" />
              <path d="M1 2l14 18M15 2L1 20" stroke="#000080" strokeWidth="4" />
              <text x="13" y="22" fontFamily={ui} fontSize="17" fontWeight="bold" fill="#000080">ear</text>
              <path d="M0 27h47v21H0z" fill="#0000b0" />
              <text x="23" y="44" fontFamily={ui} fontSize="19" fontWeight="bold" fill="#fff" textAnchor="middle">3D</text>
            </svg>
            <time>16:16</time>
          </Tray>
        </TaskBar>
      </Window>
    </Desktop>
  );
}
